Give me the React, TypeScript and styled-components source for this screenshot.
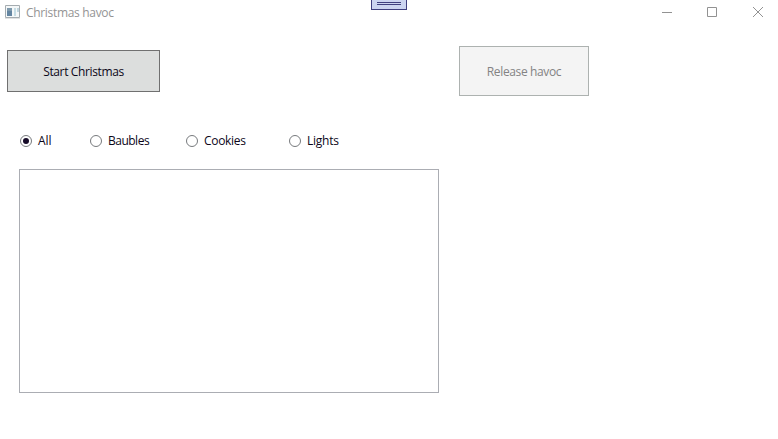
import React, { useState } from 'react';
import styled, { createGlobalStyle } from 'styled-components';

const GlobalStyle = createGlobalStyle`
  * { box-sizing: border-box; }
  body {
    margin: 0;
    background: #fff;
    overflow: hidden;
    font: 12px/16px "Open Sans", "Noto Sans", sans-serif;
    color: #0c0618;
  }
`;

const Window = styled.div`
  position: relative;
  width: 778px;
  height: 439px;
  display: flex;
  flex-direction: column;
  background: #fff;
`;

const TitleBar = styled.header`
  height: 24px;
  display: flex;
  align-items: center;
  padding: 0 0 0 5px;
`;

const AppIcon = styled.svg`
  width: 16px;
  height: 14px;
  margin-right: 5px;
`;

const Title = styled.span<{ $spacing: number }>`
  flex: 1;
  padding-top: 1px;
  color: #949494;
  white-space: nowrap;
  letter-spacing: ${(p) => p.$spacing}px;
`;

const WindowButtons = styled.div`
  display: flex;
  gap: 34px;
  margin-right: 14px;
`;

const WindowGlyph = styled.svg`
  display: block;
  width: 12px;
  height: 12px;
  fill: none;
  stroke: #929292;
`;

const DebugTab = styled.div`
  position: absolute;
  top: 0;
  left: 371px;
  width: 36px;
  height: 10px;
  padding: 2px 5px 0;
  background: #ccd5f0;
  border: 1px solid #40407f;
  border-top: 0;
`;

const Grip = styled.div`
  height: 3px;
  border: solid #40407f;
  border-width: 1px 0;
`;

const Toolbar = styled.div`
  display: flex;
  justify-content: space-between;
  align-items: center;
  width: 582px;
  height: 50px;
  margin: 22px 0 0 7px;
`;

const Button = styled.button<{ $width: number; $height: number; $spacing: number }>`
  width: ${(p) => p.$width}px;
  height: ${(p) => p.$height}px;
  padding: 2px 0 0;
  border: 1px solid #707070;
  background: #dcdedd;
  color: #0c0618;
  font: inherit;
  white-space: nowrap;
  letter-spacing: ${(p) => p.$spacing}px;
  &:disabled {
    border-color: #adb2b0;
    background: #f4f4f4;
    color: #838383;
  }
`;

const Filters = styled.div`
  display: grid;
  grid-template-columns: 70px 96px 103px auto;
  align-items: center;
  height: 16px;
  margin: 36px 0 0 20px;
`;

const RadioLabel = styled.label<{ $spacing: number }>`
  display: flex;
  align-items: center;
  gap: 6px;
  white-space: nowrap;
  letter-spacing: ${(p) => p.$spacing}px;
`;

const Radio = styled.input`
  appearance: none;
  display: grid;
  place-items: center;
  width: 12px;
  height: 12px;
  margin: 0;
  border: 1px solid #777a7d;
  border-radius: 50%;
  background: #fff;
  &:checked::before {
    content: '';
    width: 6px;
    height: 6px;
    border-radius: 50%;
    background: #170b28;
  }
`;

const RadioText = styled.span`
  padding-top: 1px;
`;

const ListBox = styled.div`
  width: 420px;
  height: 224px;
  margin: 21px 0 0 19px;
  border: 1px solid #abadb3;
`;

const filters = [
  { name: 'All', spacing: -0.1 },
  { name: 'Baubles', spacing: -0.5 },
  { name: 'Cookies', spacing: -0.3 },
  { name: 'Lights', spacing: -0.25 },
];

export default function App() {
  const [selected, setSelected] = useState('All');
  return (
    <>
      <GlobalStyle />
      <Window>
        <TitleBar>
          <AppIcon viewBox="0 0 16 14">
            <path d="M.5.5h14v12H.5z" fill="#f4f7f8" stroke="#a5acb0" />
            <path d="M0 13.5h15" stroke="#e2e2e2" />
            <path d="M2 3h5v8H2z" fill="#6485a1" />
            <path d="M2 3h5v3H2z" fill="#7e99ac" />
            <path d="M9 3h2v8H9z" fill="#c6dce4" />
            <path d="M12 3h2v4h-2z" fill="#bfd5de" />
          </AppIcon>
          <Title $spacing={-0.32}>Christmas havoc</Title>
          <WindowButtons>
            <WindowGlyph viewBox="0 0 12 12"><path d="M2 6.5h10" /></WindowGlyph>
            <WindowGlyph viewBox="0 0 12 12"><path d="M1.5 1.5h9v9h-9z" /></WindowGlyph>
            <WindowGlyph viewBox="0 0 12 12"><path d="M1 1l10 10M11 1L1 11" /></WindowGlyph>
          </WindowButtons>
        </TitleBar>
        <DebugTab><Grip /></DebugTab>
        <Toolbar>
          <Button $width={153} $height={42} $spacing={-0.37}>Start Christmas</Button>
          <Button $width={130} $height={50} $spacing={-0.37} disabled>Release havoc</Button>
        </Toolbar>
        <Filters>
          {filters.map((f) => (
            <RadioLabel key={f.name} $spacing={f.spacing}>
              <Radio
                type="radio"
                name="ornament"
                checked={selected === f.name}
                onChange={() => setSelected(f.name)}
              />
              <RadioText>{f.name}</RadioText>
            </RadioLabel>
          ))}
        </Filters>
        <ListBox />
      </Window>
    </>
  );
}
